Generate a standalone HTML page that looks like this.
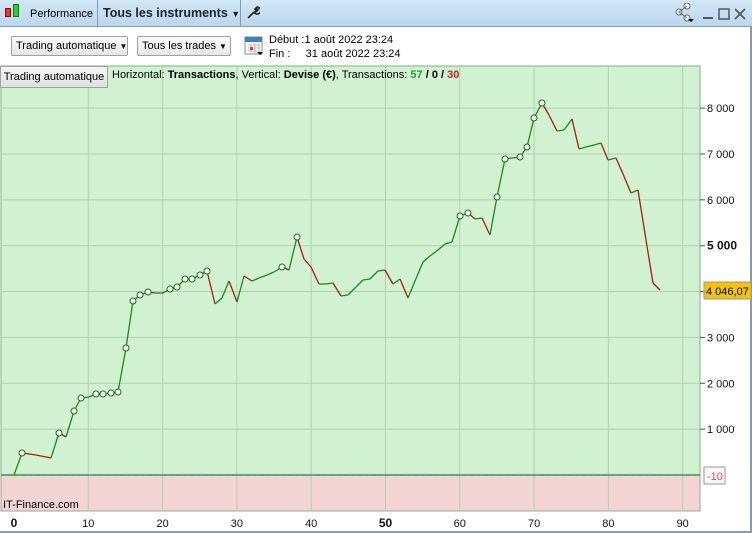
<!DOCTYPE html><html><head><meta charset="utf-8"><style>
body{margin:0;width:752px;height:533px;overflow:hidden;background:#fff;font-family:"Liberation Sans",sans-serif;font-size:11px;position:relative}
.abs{position:absolute;white-space:nowrap}
.top{left:0;top:0;width:752px;height:26px;background:linear-gradient(#d3e7f7,#b9d6ee);border-bottom:1px solid #7f9db9}
.btn{border:1px solid #a0a0a0;background:linear-gradient(#fafafa,#e6e6e6);height:18px;line-height:18px;padding:0 4px;font-size:11px;border-radius:2px;box-sizing:border-box;height:20px}
</style></head><body>
<div class="abs top"></div>
<div class="abs" style="left:5px;top:8px;width:4px;height:7px;background:#e33;border:1px solid #a00"></div>
<div class="abs" style="left:13px;top:4px;width:4px;height:11px;background:#3c3;border:1px solid #080"></div>
<div class="abs" style="left:30px;top:8px;font-size:11px">Performance</div>
<div class="abs" style="left:97px;top:0;width:1px;height:26px;background:#7f9db9"></div>
<div class="abs" style="left:103px;top:6px;font-size:12.5px;font-weight:bold;color:#222">Tous les instruments <span style="font-size:9px">▼</span></div>
<div class="abs" style="left:240px;top:0;width:1px;height:26px;background:#7f9db9"></div>
<svg class="abs" style="left:246px;top:5px" width="14" height="14"><path d="M2 13L8 7M8 7a3.5 3.5 0 1 0 3-5l-2 2 1 1 2-1a3.5 3.5 0 0 1-4 3" stroke="#222" stroke-width="1.6" fill="none"/></svg>
<svg class="abs" style="left:672px;top:3px" width="80" height="22"><circle cx="15" cy="3" r="3" fill="#fff" stroke="#666"/><circle cx="7" cy="9" r="3" fill="#fff" stroke="#666"/><circle cx="15" cy="15" r="3" fill="#fff" stroke="#666"/><path d="M15 3L7 9L15 15" stroke="#666" fill="none"/><path d="M16 16h6l-3 3z" fill="#000"/><path d="M31 15h10" stroke="#555" stroke-width="2"/><rect x="47" y="6" width="10" height="10" fill="none" stroke="#555" stroke-width="1.5"/><path d="M63 6l10 10M73 6l-10 10" stroke="#555" stroke-width="1.7"/></svg>
<div class="abs" style="left:750px;top:26px;width:2px;height:507px;background:#8a9aa8"></div>
<div class="abs" style="left:0;top:531px;width:752px;height:2px;background:#8a9aa8"></div>
<div class="abs btn" style="left:11px;top:36px;width:117px">Trading automatique <span style="font-size:8px">▼</span></div>
<div class="abs btn" style="left:137px;top:36px;width:94px">Tous les trades <span style="font-size:8px">▼</span></div>
<svg class="abs" style="left:244px;top:35px" width="20" height="22"><rect x="1" y="2" width="17" height="17" fill="#fff" stroke="#888"/><rect x="1" y="2" width="17" height="5" fill="#3a7fc7"/><path d="M4 10h12M4 13h12M4 16h12M7 8v10M11 8v10M15 8v10" stroke="#aaa" stroke-width=".7"/><rect x="6" y="12" width="3" height="3" fill="#e33"/><path d="M13 17h6l-3 3z" fill="#000"/></svg>
<div class="abs" style="left:269px;top:33px;line-height:14px">Début :1 août 2022 23:24<br>Fin :&nbsp;&nbsp;&nbsp;&nbsp; 31 août 2022 23:24</div>
<svg class="abs" style="left:0;top:0" width="752" height="533">
<rect x="1" y="66" width="699" height="409" fill="#d0f2d0" stroke="#7fb07f"/>
<rect x="1" y="475" width="699" height="36" fill="#f3d4d4" stroke="#a0a0a0"/>
<g id="grid"></g>
<line x1="1" y1="475" x2="700" y2="475" stroke="#3030b0"/>
<line x1="1" y1="475" x2="700" y2="475" stroke="#44bb44" stroke-width="2" stroke-dasharray="4,3"/>
<g id="line"></g>
<g id="ax" font-size="11" fill="#111"></g>
<rect x="704" y="282" width="47" height="17" fill="#f5c400" stroke="#999"/>
<text x="706" y="295" font-size="11">4 046,07</text>
<rect x="704" y="467" width="21" height="17" fill="#f6f6f6" stroke="#999"/>
<text x="707" y="480" font-size="11" fill="#e05050">-10</text>
<text x="3" y="508" font-size="11">IT-Finance.com</text>
</svg>
<div class="abs" style="left:0;top:66px;width:106px;height:20px;background:linear-gradient(#f4f4f4,#e0e0e0);border:1px solid #a0a0a0;line-height:20px;text-align:center;font-size:11px">Trading automatique</div>
<div class="abs" style="left:112px;top:69px;font-size:11px">Horizontal: <b>Transactions</b>, Vertical: <b>Devise (€)</b>, Transactions: <b style="color:#2a9a2a">57</b> <b>/</b> <b>0</b> <b>/</b> <b style="color:#c02020">30</b></div>
<script>
var ns="http://www.w3.org/2000/svg";
function el(p,t,a,tx){var e=document.createElementNS(ns,t);for(var k in a)e.setAttribute(k,a[k]);if(tx!=null)e.textContent=tx;document.getElementById(p).appendChild(e);}
for(var i=1;i<=9;i++){var x=14+i*7.43*10;el("grid","line",{x1:x,y1:67,x2:x,y2:511,stroke:"#b0d0b0"});}
for(var v=1;v<=8;v++){var y=475-v*45.86;el("grid","line",{x1:1,y1:y,x2:700,y2:y,stroke:"#b0d0b0"});el("ax","line",{x1:700,y1:y,x2:705,y2:y,stroke:"#555"});el("ax","text",{x:707,y:y+4,"font-weight":v==5?"bold":"normal","font-size":v==5?12:11},v+" 000");}
for(var i=0;i<=9;i++){var x=14+i*74.3;el("ax","text",{x:x,y:527,"text-anchor":"middle","font-weight":(i==0||i==5)?"bold":"normal","font-size":(i==0||i==5)?12:11},i*10);}
var P=[[14,475],[22,453],[36,455],[51,458],[59,433],[66,437],[74,411],[81,398],[89,397],[96,394],[103,394],[111,393],[118,392],[126,348],[133,301],[140,295],[148,292],[155,293],[163,293],[170,289],[177,287],[185,279],[192,279],[200,275],[207,271],[215,304],[222,298],[229,281],[237,302],[244,276],[252,281],[259,278],[267,275],[274,272],[282,267],[289,270],[297,237],[304,259],[311,267],[319,284],[326,284],[333,283],[341,296],[348,295],[356,287],[363,280],[370,279],[378,271],[385,270],[393,284],[400,279],[408,298],[415,281],[423,262],[430,256],[438,250],[445,244],[452,242],[460,216],[468,213],[475,219],[482,218],[490,235],[497,197],[505,159],[512,158],[520,157],[527,147],[534,118],[542,103],[549,115],[557,131],[564,130],[572,119],[579,149],[586,147],[594,145],[601,143],[608,160],[616,158],[623,174],[631,193],[638,190],[646,240],[653,283],[660,290]];
for(var i=1;i<P.length;i++){el("line","line",{x1:P[i-1][0],y1:P[i-1][1],x2:P[i][0],y2:P[i][1],stroke:P[i][1]<=P[i-1][1]?"#1a8a1a":"#b01818","stroke-width":1.3});}
var C=[22,59,74,81,96,103,111,118,126,133,140,148,170,177,185,192,200,207,282,297,460,468,497,505,520,527,534,542];
P.forEach(function(p){if(C.indexOf(p[0])>=0)el("line","circle",{cx:p[0],cy:p[1],r:3,fill:"#fff",stroke:"#1a6a1a"});});
</script>
</body></html>
